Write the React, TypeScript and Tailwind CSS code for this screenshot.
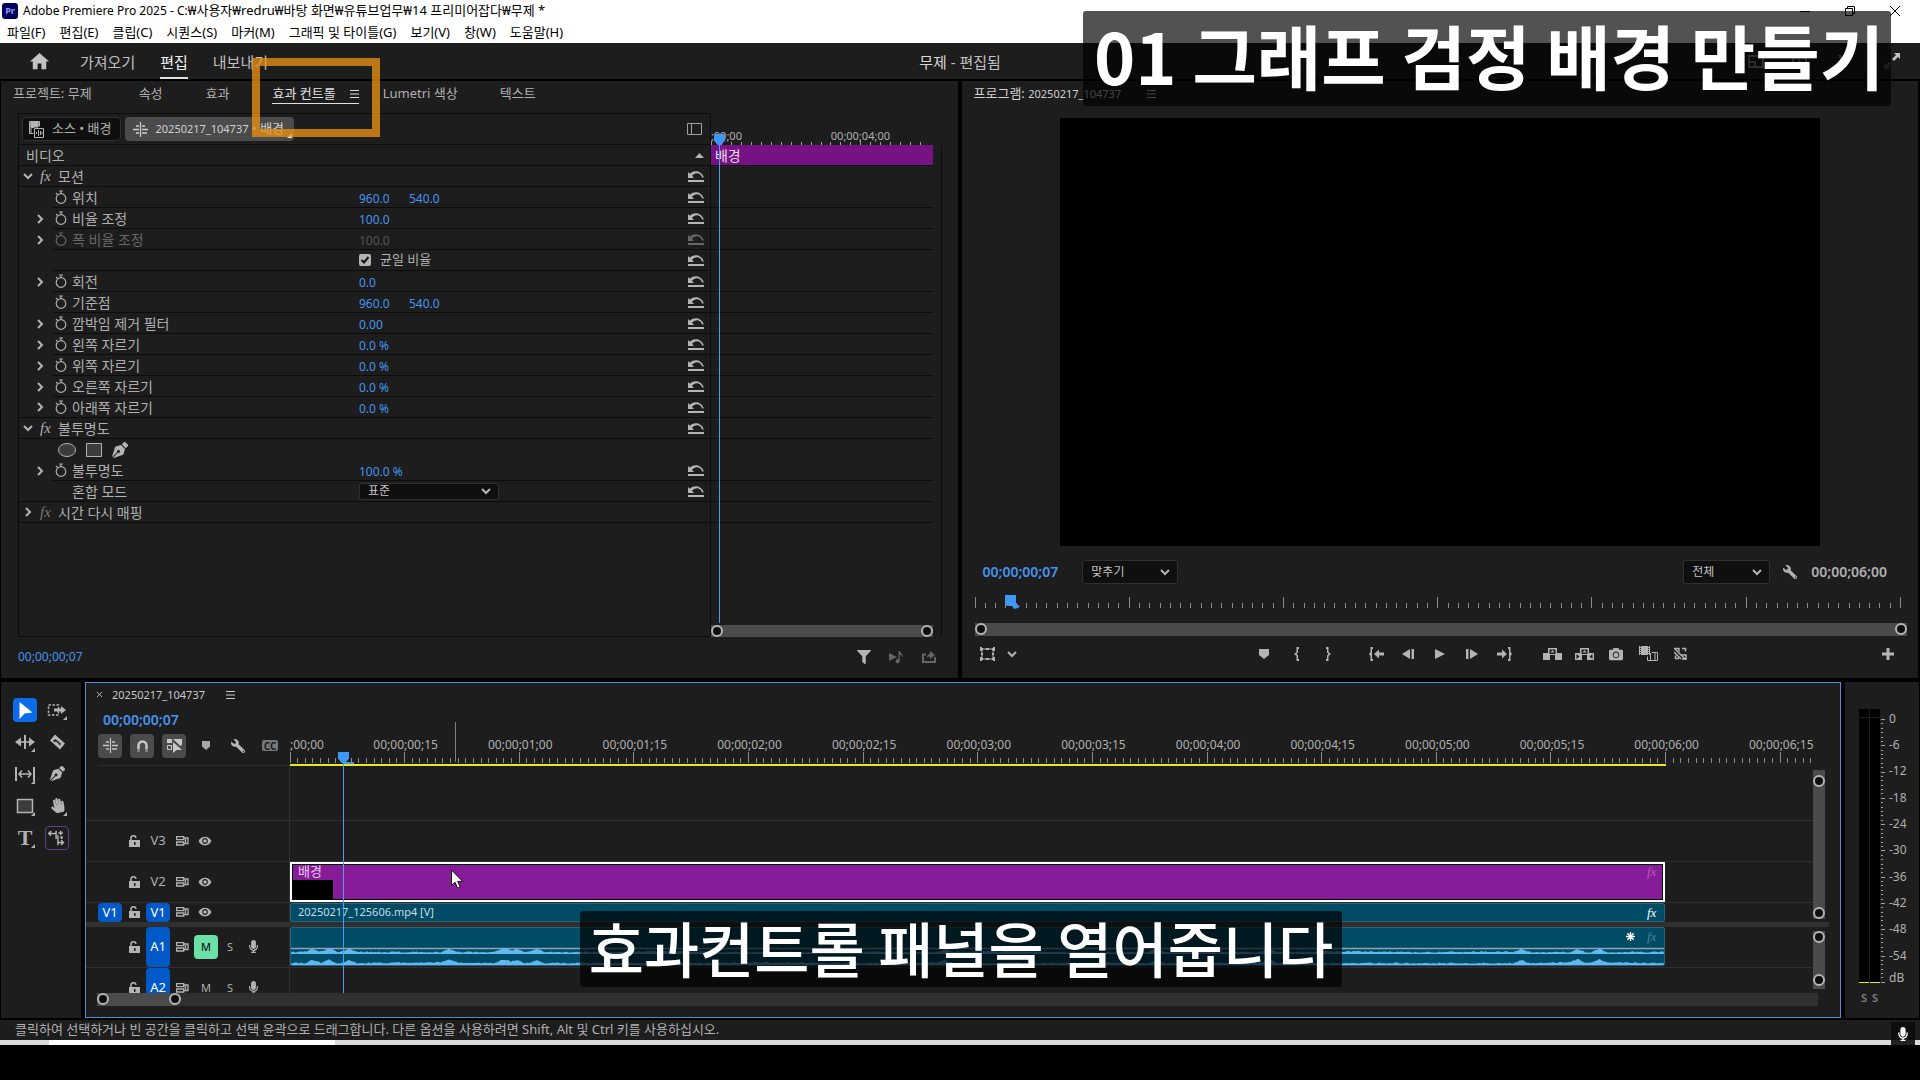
import type { ReactNode } from "react";
import { FaCamera, FaFilter, FaHandPaper, FaMicrophone, FaPenNib, FaWrench } from "react-icons/fa";
import { MdHome, MdRemoveRedEye } from "react-icons/md";

const MENUS = [
  "파일(F)",
  "편집(E)",
  "클립(C)",
  "시퀀스(S)",
  "마커(M)",
  "그래픽 및 타이틀(G)",
  "보기(V)",
  "창(W)",
  "도움말(H)",
];

type Param = {
  kind: "section" | "param" | "check" | "masks" | "blend";
  label: string;
  values?: string[];
  open?: boolean;
  chevron?: boolean;
  dim?: boolean;
  // line under the row: whole width, indented, or none
  line?: "full" | "indent" | "none";
  // whether the line carries on into the mini timeline
  lane?: boolean;
};

const PARAMS: Param[] = [
  { kind: "section", label: "모션", open: true, lane: false },
  { kind: "param", label: "위치", values: ["960.0", "540.0"] },
  { kind: "param", label: "비율 조정", values: ["100.0"], chevron: true },
  { kind: "param", label: "폭 비율 조정", values: ["100.0"], chevron: true, dim: true },
  { kind: "check", label: "균일 비율", lane: false },
  { kind: "param", label: "회전", values: ["0.0"], chevron: true },
  { kind: "param", label: "기준점", values: ["960.0", "540.0"] },
  { kind: "param", label: "깜박임 제거 필터", values: ["0.00"], chevron: true },
  { kind: "param", label: "왼쪽 자르기", values: ["0.0 %"], chevron: true },
  { kind: "param", label: "위쪽 자르기", values: ["0.0 %"], chevron: true },
  { kind: "param", label: "오른쪽 자르기", values: ["0.0 %"], chevron: true },
  { kind: "param", label: "아래쪽 자르기", values: ["0.0 %"], chevron: true, line: "full" },
  { kind: "section", label: "불투명도", open: true },
  { kind: "masks", label: "마스크", line: "none", lane: false },
  { kind: "param", label: "불투명도", values: ["100.0 %"], chevron: true },
  { kind: "blend", label: "혼합 모드", line: "full" },
  { kind: "section", label: "시간 다시 매핑", open: false, dim: true },
];

const LABELS = [
  "00;00;00;15",
  "00;00;01;00",
  "00;00;01;15",
  "00;00;02;00",
  "00;00;02;15",
  "00;00;03;00",
  "00;00;03;15",
  "00;00;04;00",
  "00;00;04;15",
  "00;00;05;00",
  "00;00;05;15",
  "00;00;06;00",
  "00;00;06;15",
];

// half-second spacing as a share of the visible sequence
const STEP = 7.522;
const PLAYHEAD = 3.51;

export default function App() {
  return (
    <div className="relative flex min-h-screen flex-col overflow-hidden bg-black font-[family-name:'Noto_Sans','Noto_Sans_CJK_KR',sans-serif] text-[13px] text-[#b0b0b0]">
      <TitleBar />
      <WorkspaceBar />
      <div className="mt-[2px] grid grid-cols-2 gap-1 pr-[2px] pl-px">
        <EffectControls />
        <ProgramMonitor />
      </div>
      <div className="mt-1 flex gap-1 pr-px pl-px">
        <Tools />
        <Timeline />
        <AudioMeter />
      </div>
      <footer className="mt-[2px] flex h-5 items-center bg-[#1d1d1d] pl-[15px] text-[13px]">
        클릭하여 선택하거나 빈 공간을 클릭하고 선택 윤곽으로 드래그합니다. 다른 옵션을 사용하려면 Shift, Alt 및 Ctrl 키를 사용하십시오.
      </footer>
      <div className="h-[5px] bg-[#d9d9d9] pl-[49px]">
        <div className="h-full w-[286px] bg-white" />
      </div>

      <div className="absolute top-[1022px] right-[5px] flex h-[23px] w-6 items-center justify-center bg-[#0c0c0c]/90">
        <FaMicrophone className="text-[14px] text-white" />
      </div>
      <div className="absolute top-[58px] left-[252px] h-[79px] w-32 border-8 border-[#ea9014]/78" />
      <h1 className="absolute top-[11px] right-[29px] flex h-[95px] w-[808px] items-center justify-center rounded-[3px] bg-black/68 pb-2 pl-1 font-[family-name:'Noto_Sans_CJK_KR',sans-serif] text-[70px] leading-none font-bold whitespace-nowrap text-white">
        01 그래프 검정 배경 만들기
      </h1>
      <p className="absolute top-[911px] left-[580px] flex h-[76px] w-[762px] items-center justify-center rounded-[3px] bg-black/68 pb-1 font-[family-name:'Noto_Sans_CJK_KR',sans-serif] text-[60px] leading-none font-medium whitespace-nowrap text-white">
        효과컨트롤 패널을 열어줍니다
      </p>
      <svg className="absolute top-[869px] left-[451px]" width="13" height="21" viewBox="0 0 13 21">
        <path d="M.5 1v15.500l3.500-3.300 2.600 6 2.600-1.200-2.500-5.600h5z" fill="#fff" stroke="#111" />
      </svg>
    </div>
  );
}

function TitleBar() {
  return (
    <header className="h-[43px] bg-white text-black">
      <div className="flex h-[22px] items-center pl-[2px]">
        <span className="flex h-4 w-4 items-center justify-center rounded-[3px] bg-[#00005b] text-[9px] font-bold text-[#9999ff]">Pr</span>
        <span className="ml-[5px] text-[12px]">
          Adobe Premiere Pro 2025 - C:<span className="text-[13px]">₩사용자₩redru₩바탕 화면₩유튜브업무₩14 프리미어잡다₩무제 *</span>
        </span>
        <div className="ml-auto flex gap-[35px] pr-[20px]">
          <button aria-label="최소화">
            <svg width="10" height="10" viewBox="0 0 10 10"><path d="M0 5.500h10" stroke="#000" /></svg>
          </button>
          <button aria-label="이전 크기로">
            <svg width="10" height="10" viewBox="0 0 10 10"><path d="M.5 2.500h7v7h-7zM2.500 2.500v-2h7v7h-2" fill="none" stroke="#000" /></svg>
          </button>
          <button aria-label="닫기">
            <svg width="10" height="10" viewBox="0 0 10 10"><path d="M0 0l10 10M10 0L0 10" stroke="#000" /></svg>
          </button>
        </div>
      </div>
      <nav className="flex h-[21px] items-center gap-[14px] pl-[7px] text-[13px]">
        {MENUS.map((m) => (
          <button key={m}>{m}</button>
        ))}
      </nav>
    </header>
  );
}

function WorkspaceBar() {
  return (
    <div className="grid h-9 grid-cols-[1fr_auto_1fr] items-stretch bg-[#1d1d1d] text-[15px] text-[#c0c0c0]">
      <div className="flex items-stretch pl-7">
        <button aria-label="홈" className="w-6">
          <MdHome className="text-[23px] text-[#c4c4c4]" />
        </button>
        <button className="ml-7 pt-[2px]">가져오기</button>
        <button className="ml-[25px] border-b-2 border-[#e0e0e0] pt-1 text-[#f0f0f0]">편집</button>
        <button className="ml-[25px] pt-[2px]">내보내기</button>
      </div>
      <div className="flex items-center pt-[2px]">
        <span className="text-[#d8d8d8]">무제</span>&nbsp;- 편집됨
      </div>
      <div className="flex items-center justify-end gap-[30px] pr-5">
        <svg width="106" height="16" viewBox="0 0 106 16" fill="none" stroke="#8a8a8a" strokeWidth="2">
          <path d="M1 3h14v11H1zM1 9h6v5M49 5h-4v9h13V5h-4M51.500 9V1M91 2l7 12M98 2l-7 12" />
        </svg>
        <button aria-label="전체 화면">
          <svg width="16" height="16" viewBox="0 0 16 16">
            <path d="M16 0v6l-2-2-4 4-2-2 4-4-2-2z" fill="#c4c4c4" />
            <path d="M0 16v-6l2 2 3-3 2 2-3 3 2 2z" fill="#5a5a5a" />
          </svg>
        </button>
      </div>
    </div>
  );
}

function Burger() {
  return (
    <svg width="9" height="8" viewBox="0 0 9 8">
      <path d="M0 .5h9M0 4h9M0 7.500h9" stroke="currentColor" />
    </svg>
  );
}

function Chevron({ open }: { open?: boolean }) {
  return (
    <svg width="10" height="10" viewBox="0 0 10 10" fill="none" stroke="#b4b4b4" strokeWidth="2">
      <path d={open ? "M1 3l4 4 4-4" : "M3 1l4 4-4 4"} />
    </svg>
  );
}

function Stopwatch() {
  return (
    <svg width="13" height="14" viewBox="0 0 13 14" fill="none" stroke="currentColor" strokeWidth="1.200">
      <circle cx="6" cy="8.500" r="4.800" />
      <path d="M4 1h4M6 1v2.500M1 3l1.500 1.500" />
    </svg>
  );
}

function ResetButton({ dim }: { dim?: boolean }) {
  return (
    <button aria-label="매개 변수 재설정" className={dim ? "text-[#666]" : "text-[#b4b4b4]"}>
      <svg width="16" height="11" viewBox="0 0 16 11" fill="currentColor">
        <path d="M0 9h16v2H0zM0 1l1.800 1.700C5-.7 13-1.200 15.800 6.500h-1.600C12.500 1.400 7 .8 4 4.700L6 7H0z" />
      </svg>
    </button>
  );
}

function Knob() {
  return <span className="block h-3 w-3 shrink-0 rounded-full border-2 border-[#b4b4b4] bg-[#0f0f0f]" />;
}

function PanelSelect({ label, value, className }: { label: string; value: string; className: string }) {
  return (
    <span className={`relative inline-flex items-center ${className}`}>
      <select aria-label={label} className="h-full w-full appearance-none rounded-[3px] border border-[#303030] bg-[#0f0f0f] pl-2 text-[12px] leading-none text-[#c4c4c4]">
        <option>{value}</option>
      </select>
      <span className="pointer-events-none absolute right-2">
        <Chevron open />
      </span>
    </span>
  );
}

function EffectControls() {
  return (
    <section className="flex flex-col bg-[#1d1d1d]">
      <div className="mb-[6px] flex h-[26px] items-center pl-3 text-[13px] whitespace-nowrap">
        <button>프로젝트: 무제</button>
        <button className="ml-[47px]">속성</button>
        <button className="ml-[43px]">효과</button>
        <button className="ml-[43px] flex h-5 items-center gap-[14px] border-b border-[#e0e0e0] text-[#e0e0e0]">
          효과 컨트롤 <Burger />
        </button>
        <button className="ml-6">Lumetri 색상</button>
        <button className="ml-[42px]">텍스트</button>
      </div>

      <div className="mr-4 ml-[17px] grid flex-1 grid-cols-[3fr_1fr] border-l border-[#0c0c0c]">
        <div className="flex flex-col border-t border-r border-b border-[#0c0c0c]">
          <div className="flex h-[31px] items-center border-b border-[#0c0c0c] pr-2 pl-[3px]">
            <button className="flex h-6 items-center gap-2 rounded-[4px] border border-[#303030] bg-[#0f0f0f] pr-2 pl-[6px] whitespace-nowrap">
              <svg width="15" height="17" viewBox="0 0 15 17" fill="none" stroke="#b4b4b4">
                <path d="M.5.500h10v5M.5.500v12h4M2 1v11M9 1v4M2 6.500h3" />
                <path d="M2 1h7v5H2z" fill="#b4b4b4" />
                <path d="M5.500 7.500h9v9h-9zM7.500 11v2M9.500 9v6M11.500 10v4M13 11v2" />
              </svg>
              소스 • 배경
            </button>
            <button className="relative ml-1 flex h-6 items-center gap-2 rounded-[4px] bg-[#4b4b4b] pr-[10px] pl-2 whitespace-nowrap text-[#d0d0d0]">
              <SequenceIcon />
              <span>
                <span className="text-[11px]">20250217_104737</span> • 배경
              </span>
              <svg className="absolute right-[2px] bottom-[3px]" width="5" height="5" viewBox="0 0 5 5">
                <path d="M5 0v5H0z" fill="#e8e8e8" />
              </svg>
            </button>
            <button aria-label="타임라인 보기 표시" className="ml-auto">
              <svg width="15" height="12" viewBox="0 0 15 12" fill="none" stroke="#a0a0a0">
                <path d="M.5.500h14v11H.5zM4.500.5v11" />
              </svg>
            </button>
          </div>
          <div className="flex h-[21px] items-center justify-between border-b border-[#0c0c0c] pr-[6px] pl-[7px] text-[14px]">
            비디오
            <svg width="9" height="5" viewBox="0 0 9 5">
              <path d="M4.500 0L9 5H0z" fill="#b4b4b4" />
            </svg>
          </div>
          {PARAMS.map((p, i) => (
            <ParamRow key={i} p={p} />
          ))}
        </div>
        <MiniTimeline />
      </div>

      <div className="flex h-[41px] items-center pr-[22px] pl-[17px]">
        <span className="text-[12px] text-[#4694ee]">00;00;00;07</span>
        <div className="ml-auto flex items-center gap-[18px]">
          <button aria-label="속성 필터">
            <FaFilter className="text-[14px] text-[#b4b4b4]" />
          </button>
          <button aria-label="오디오 재생">
            <svg width="15" height="12" viewBox="0 0 15 12" fill="#666">
              <path d="M0 2l8 4-8 4zM9.500 0h1.200c.2 2 3.500 2.500 3 6.500-.5-1.800-1.500-2.500-3-2.700V10a2 2 0 1 1-1.200-1.700z" />
            </svg>
          </button>
          <button aria-label="내보내기">
            <svg width="14" height="12" viewBox="0 0 14 12">
              <path d="M4 3.500H1v7.500h12V6" fill="none" stroke="#666" strokeWidth="2" />
              <path d="M5 7c0-3 1-4 3-4V0l5 4-5 4V5.500C6.500 5.500 6 6 5 7z" fill="#666" />
            </svg>
          </button>
        </div>
      </div>
    </section>
  );
}

function ParamRow({ p }: { p: Param }) {
  const tone = p.dim && p.kind === "param" ? "text-[#666]" : "";

  if (p.kind === "section") {
    return (
      <div className="flex h-[21px] items-center border-b border-[#0c0c0c] pr-[6px] pl-1 text-[14px]">
        <button aria-label={p.label} className="w-[17px]">
          <Chevron open={p.open} />
        </button>
        <span className={`w-[18px] font-[family-name:'Liberation_Serif',serif] text-[15px] italic ${p.dim ? "text-[#777]" : ""}`}>fx</span>
        <span>{p.label}</span>
        {p.open && (
          <span className="ml-auto flex">
            <ResetButton />
          </span>
        )}
      </div>
    );
  }

  if (p.kind === "masks") {
    return (
      <div className="flex h-[21px] items-center gap-[10px] pl-[39px]">
        <button aria-label="타원 마스크">
          <svg width="18" height="14" viewBox="0 0 18 14"><ellipse cx="9" cy="7" rx="8.500" ry="6.500" fill="#3c3c3c" stroke="#b4b4b4" /></svg>
        </button>
        <button aria-label="사각형 마스크">
          <svg width="16" height="14" viewBox="0 0 16 14"><path d="M.5.500h15v13H.5z" fill="#3c3c3c" stroke="#b4b4b4" /></svg>
        </button>
        <button aria-label="펜 마스크">
          <FaPenNib className="text-[16px] text-[#b4b4b4]" />
        </button>
      </div>
    );
  }

  return (
    <div className={`flex h-[21px] ${tone} ${p.line === "full" ? "border-b border-[#0c0c0c]" : ""}`}>
      <div className="flex w-[34px] items-center justify-end pr-2">
        {p.chevron && (
          <button aria-label={p.label}>
            <Chevron />
          </button>
        )}
      </div>
      <div className={`flex flex-1 items-center pr-[6px] ${p.line === "full" ? "" : "border-b border-[#0c0c0c]"}`}>
        <div className="flex w-[306px] items-center gap-1 pl-[2px] text-[14px]">
          {p.kind === "param" && (
            <button aria-label={`${p.label} 애니메이션 켜기`}>
              <Stopwatch />
            </button>
          )}
          {p.kind === "blend" && <span className="w-[13px]" />}
          {p.kind !== "check" && <span>{p.label}</span>}
        </div>
        {p.values?.map((v, i) => (
          <input key={i} aria-label={p.label} defaultValue={v} className={`w-[50px] pt-[3px] text-[12px] ${p.dim ? "text-[#555]" : "text-[#4694ee]"}`} />
        ))}
        {p.kind === "check" && (
          <label className="flex items-center gap-[9px] text-[13px]">
            <span className="relative flex h-3 w-3">
              <input type="checkbox" defaultChecked className="h-3 w-3 appearance-none rounded-[2px] bg-[#b4b4b4]" />
              <svg className="pointer-events-none absolute inset-0" width="12" height="12" viewBox="0 0 12 12" fill="none" stroke="#111" strokeWidth="2">
                <path d="M2.500 6l2.500 2.500L9.500 3" />
              </svg>
            </span>
            {p.label}
          </label>
        )}
        {p.kind === "blend" && <PanelSelect label={p.label} value="표준" className="h-[17px] w-[140px]" />}
        <span className="ml-auto flex">
          <ResetButton dim={p.dim} />
        </span>
      </div>
    </div>
  );
}

function MiniTimeline() {
  return (
    <div className="relative flex flex-col">
      <div className="relative h-8 overflow-hidden text-[11px]">
        <span className="absolute top-[17px] left-0 leading-none">;00;00</span>
        <span className="absolute top-[17px] left-[52%] leading-none">00;00;04;00</span>
        <svg className="absolute bottom-0 left-0 w-full" height="4">
          {Array.from({ length: 22 }, (_, i) => (
            <line key={i} x1={`${i * 4.300 + 0.400}%`} x2={`${i * 4.300 + 0.400}%`} y1={i % 15 ? 1 : 0} y2="4" stroke="#a0a0a0" shapeRendering="crispEdges" />
          ))}
        </svg>
      </div>
      <div className="flex flex-1 flex-col border-r border-[#0c0c0c] pr-2">
        <div className="flex h-5 items-center bg-[#761284] pl-1 text-[14px] text-[#f0d8f4]">배경</div>
        <div className="h-px bg-[#0c0c0c]" />
        {PARAMS.map((p, i) => (
          <div key={i} className={`h-[21px] ${p.lane === false ? "" : "border-b border-[#0c0c0c]"}`} />
        ))}
        <div className="mt-auto flex h-3 justify-between bg-[#4b4b4b]">
          <Knob />
          <Knob />
        </div>
      </div>
      <div className="absolute top-5 bottom-[14px] left-[3px] flex w-[11px] flex-col items-center">
        <PlayheadCap />
        <div className="w-px flex-1 bg-[#4b9cf5]" />
      </div>
    </div>
  );
}

function PlayheadCap() {
  return (
    <svg width="11" height="12" viewBox="0 0 12 12" preserveAspectRatio="none" className="shrink-0">
      <path d="M0 1h12v6.500L8 12H4L0 7.500z" fill="#4096f3" />
    </svg>
  );
}

function SequenceIcon() {
  return (
    <svg width="15" height="15" viewBox="0 0 15 15" fill="none" stroke="currentColor" strokeWidth="1.600">
      <path d="M7.500 0v15" strokeWidth="1.200" />
      <path d="M3 4h3M0 7.500h6M3 11h3M9 4h3M9 7.500h6M9 11h5" />
    </svg>
  );
}

function IconButton({ label, w = 16, h = 16, children }: { label: string; w?: number; h?: number; children: ReactNode }) {
  return (
    <button aria-label={label} className="flex h-8 w-8 items-center justify-center">
      <svg width={w} height={h} viewBox={`0 0 ${w} ${h}`} fill="#b4b4b4">
        {children}
      </svg>
    </button>
  );
}

function ProgramMonitor() {
  return (
    <section className="flex flex-col bg-[#1d1d1d]">
      <div className="flex h-[37px] items-start pt-[3px] pl-3 text-[#d0d0d0]">
        <span>
          프로그램: <span className="text-[11px]">20250217_104737</span>
        </span>
        <button aria-label="패널 메뉴" className="mt-[6px] ml-[26px]">
          <Burger />
        </button>
      </div>
      <div className="px-[98px]">
        <div className="aspect-video bg-black" />
      </div>
      <div className="mt-[14px] flex h-6 items-center pr-[31px] pl-[21px] text-[14px] font-semibold">
        <span className="text-[#4694ee]">00;00;00;07</span>
        <PanelSelect label="확대/축소" value="맞추기" className="ml-[24px] h-6 w-24 font-normal" />
        <PanelSelect label="재생 해상도" value="전체" className="ml-auto h-6 w-[87px] font-normal" />
        <button aria-label="설정" className="mr-[14px] ml-[13px]">
          <FaWrench className="-scale-x-100 text-[14px]" />
        </button>
        <span>00;00;06;00</span>
      </div>
      <div className="relative mt-[11px] mr-[18px] ml-[13px]">
        <svg className="block w-full overflow-visible" height="13">
          {Array.from({ length: 91 }, (_, i) => (
            <line key={i} x1={`${i / 0.900}%`} x2={`${i / 0.900}%`} y1={i % 15 ? 8 : 2} y2="13" stroke="#8c8c8c" shapeRendering="crispEdges" />
          ))}
        </svg>
        <svg className="absolute top-0 left-[3.300%]" width="16" height="14" viewBox="0 0 16 14">
          <path d="M0 0h11v9l4 2-2 2-4 1-2-3H2L0 9z" fill="#4096f3" />
        </svg>
      </div>
      <div className="mt-[15px] mr-[11px] ml-[13px] flex h-[13px] justify-between bg-[#4b4b4b]">
        <Knob />
        <Knob />
      </div>
      <div className="mb-[6px] flex h-9 items-center justify-between pr-[14px] pl-[13px]">
        <div className="flex w-[98px] items-center">
          <button aria-label="보기 옵션" className="ml-[5px]">
            <svg width="15" height="14" viewBox="0 0 15 14" fill="none" stroke="#b4b4b4">
              <path d="M2 2h11v10H2z" />
              <path d="M1 0v4M-1 2h4M14 0v4M12 2h4M1 10v4M-1 12h4M14 10v4M12 12h4M6 2h3M6 12h3M2 6v2M13 6v2" strokeWidth="2" />
            </svg>
          </button>
          <button aria-label="더 보기" className="ml-3">
            <Chevron open />
          </button>
        </div>
        <div className="flex gap-4">
          <div className="flex">
            <IconButton label="마커 추가" w={10} h={10}>
              <path d="M0 0h10v6l-5 4-5-4z" />
            </IconButton>
            <IconButton label="시작 표시" w={5} h={14}>
              <path d="M5 0v2H4v3.500L2.500 7 4 8.500V12h1v2H2.500V9L0 7l2.500-2V0z" />
            </IconButton>
            <IconButton label="종료 표시" w={5} h={14}>
              <path d="M0 0v2h1v3.500L2.500 7 1 8.500V12H0v2h2.500V9L5 7 2.500 5V0z" />
            </IconButton>
          </div>
          <div className="flex">
            <IconButton label="시작 지점으로 이동" w={15} h={14}>
              <path d="M4 0v2H3v10h1v2H1.500V9L0 7l1.500-2V0zM15 5.500v3h-5v3L5 7l5-4.500v3z" />
            </IconButton>
            <IconButton label="이전 프레임" w={12} h={10}>
              <path d="M8 0v10L0 5zM9.500 0H12v10H9.500z" />
            </IconButton>
            <IconButton label="재생" w={10} h={10}>
              <path d="M0 0l10 5-10 5z" />
            </IconButton>
            <IconButton label="다음 프레임" w={12} h={10}>
              <path d="M4 0v10l8-5zM0 0h2.500v10H0z" />
            </IconButton>
            <IconButton label="종료 지점으로 이동" w={15} h={14}>
              <path d="M11 0v2h1v10h-1v2h2.500V9L15 7l-1.500-2V0zM0 5.500v3h5v3L10 7 5 2.500v3z" />
            </IconButton>
          </div>
          <div className="flex">
            <IconButton label="제거" w={19} h={12}>
              <path d="M0 5h5V0h9v5h5v7h-7V7H7v5H0zM6.500 1.500V6h6V1.500z" fillRule="evenodd" />
              <path d="M9.500 2l2 2.500h-4z" />
            </IconButton>
            <IconButton label="추출" w={19} h={12}>
              <path d="M0 5h5V0h9v5h5v7h-7V7H7v5H0zM6.500 1.500V6h6V1.500zM1.500 6v5l3-2.500zM17.500 6v5l-3-2.500z" fillRule="evenodd" />
              <path d="M9.500 2l2 2.500h-4z" />
            </IconButton>
            <button aria-label="프레임 내보내기" className="flex h-8 w-8 items-center justify-center">
              <FaCamera className="text-[14px] text-[#b4b4b4]" />
            </button>
            <IconButton label="비교 보기" w={19} h={15}>
              <path d="M0 0h11v9H0z" />
              <path d="M1.500 0v9M9.500 0v9" stroke="#1d1d1d" strokeDasharray="1 1" />
              <path d="M8.500 10.500v4h10v-8h-6M11.500 7v7M16 7v7" fill="none" stroke="#b4b4b4" />
            </IconButton>
            <IconButton label="프록시 전환" w={13} h={13}>
              <path d="M1 1.500h4v3M7.500 8h4.500v4H8" fill="none" stroke="#b4b4b4" strokeWidth="1.500" />
              <path d="M0 1l12 12M0 5l7 7M8 1.500h3.500v3M1.500 8.500v3H5" fill="none" stroke="#b4b4b4" strokeWidth="1.500" />
            </IconButton>
          </div>
        </div>
        <div className="w-8">
          <IconButton label="단추 편집기" w={12} h={12}>
            <path d="M4.500 0h3v4.500H12v3H7.500V12h-3V7.500H0v-3h4.500z" />
          </IconButton>
        </div>
      </div>
    </section>
  );
}

function Corner() {
  return <path d="M22 18v4h-4z" fill="#b4b4b4" stroke="none" />;
}

function Tool({ label, className = "", children }: { label: string; className?: string; children: ReactNode }) {
  return (
    <button aria-label={label} className={`flex h-6 w-6 items-center justify-center rounded-[4px] ${className}`}>
      <svg width="24" height="24" viewBox="0 0 24 24" fill="none" stroke="#b4b4b4" strokeWidth="1.500">
        {children}
      </svg>
    </button>
  );
}

function Tools() {
  return (
    <aside className="w-20 bg-[#1d1d1d] pt-4 pl-3">
      <div className="grid w-14 grid-cols-2 gap-2">
        <Tool label="선택 도구" className="bg-[#0a6ce8]">
          <path d="M6.500 4v17l5-5.500 8-1z" fill="#fff" stroke="none" />
        </Tool>
        <Tool label="앞으로 트랙 선택 도구">
          <path d="M3.500 7h10v10h-10z" strokeDasharray="2.500 1.500" />
          <path d="M9 12h8" strokeWidth="3" />
          <path d="M16 8l5 4-5 4z" fill="#b4b4b4" stroke="none" />
          <Corner />
        </Tool>
        <Tool label="잔물결 편집 도구">
          <path d="M12 5v14" strokeWidth="2" />
          <path d="M6 12h12" />
          <path d="M2 12l6-4.500v9zM22 12l-6-4.500v9z" fill="#b4b4b4" stroke="none" />
          <Corner />
        </Tool>
        <Tool label="자르기 도구">
          <path d="M10 4.500l10 9-5 6-10-9z" fill="#b4b4b4" stroke="none" />
          <path d="M10 9.500l5 4.500M8.500 10.500l2 1M14.500 15l.500-2" stroke="#1d1d1d" />
        </Tool>
        <Tool label="밀어넣기 도구">
          <path d="M3 5v14M21 5v14" strokeWidth="2" />
          <path d="M6 12h12M9 8.500L6 12l3 3.500M15 8.500l3 3.500-3 3.500" />
          <Corner />
        </Tool>
        <button aria-label="펜 도구" className="flex h-6 w-6 items-center justify-center">
          <FaPenNib className="text-[15px] text-[#b4b4b4]" />
        </button>
        <Tool label="사각형 도구">
          <path d="M4.500 5.500h15v13h-15z" fill="#3c3c3c" />
          <Corner />
        </Tool>
        <span className="relative">
          <button aria-label="손 도구" className="flex h-6 w-6 items-center justify-center">
            <FaHandPaper className="-rotate-12 text-[15px] text-[#b4b4b4]" />
          </button>
          <svg className="pointer-events-none absolute top-0 left-0" width="24" height="24"><Corner /></svg>
        </span>
        <span className="relative">
          <button aria-label="문자 도구" className="flex h-6 w-6 items-center justify-center font-[family-name:'Liberation_Serif',serif] text-[22px] leading-none font-bold">
            T
          </button>
          <svg className="pointer-events-none absolute top-0 left-0" width="24" height="24"><Corner /></svg>
        </span>
        <Tool label="생성형 확장 도구" className="border border-[#5c3f8f]">
          <path d="M3 7h8M5.500 4.500L3 7l2.500 2.500M11 4v9M13 9v11M13 17h6M16.500 14.500L19 17l-2.500 2.500M16 4v5M13.500 6.500h5M17 10v3M15.500 11.500h3" strokeWidth="1.600" />
        </Tool>
      </div>
    </aside>
  );
}

function Timeline() {
  return (
    <section className="flex min-w-0 flex-1 flex-col border border-[#4d8fdb] bg-[#1d1d1d]">
      <div className="flex h-6 items-center pl-[11px] text-[11px] text-[#c8c8c8]">
        <button aria-label="시퀀스 닫기">
          <svg width="5" height="5" viewBox="0 0 5 5"><path d="M0 0l5 5M5 0L0 5" stroke="#b4b4b4" /></svg>
        </button>
        <span className="ml-[10px]">20250217_104737</span>
        <button aria-label="패널 메뉴" className="ml-[21px]">
          <Burger />
        </button>
      </div>

      <div className="relative flex flex-col">
        <div className="flex h-[59px]">
          <div className="flex w-[204px] flex-col pl-3">
            <span className="flex h-[27px] items-center pb-[2px] pl-[5px] text-[14px] font-semibold text-[#4694ee]">00;00;00;07</span>
            <div className="flex gap-2 text-[#c8c8c8]">
              <button aria-label="시퀀스를 중첩으로 삽입" className="flex h-6 w-6 items-center justify-center rounded-[4px] bg-[#4b4b4b]">
                <SequenceIcon />
              </button>
              <button aria-label="스냅" className="flex h-6 w-6 items-center justify-center rounded-[4px] bg-[#4b4b4b]">
                <svg width="11" height="12" viewBox="0 0 11 12" fill="none" stroke="currentColor" strokeWidth="2.500">
                  <path d="M1.500 9V5.500a4 4 0 0 1 8 0V9" />
                  <path d="M1.500 9v3M9.500 9v3" stroke="#888" />
                </svg>
              </button>
              <button aria-label="연결된 선택" className="flex h-6 w-6 items-center justify-center rounded-[4px] bg-[#4b4b4b]">
                <svg width="15" height="15" viewBox="0 0 15 15" fill="currentColor">
                  <path d="M0 1h5v4H0zM6.500 1H15v5.500l-1.500 1.500L6.500 1.500zM6 4l9 8H9.500L6 15z" />
                  <path d="M4.500 7.500h-4v4h4z" fill="none" stroke="currentColor" />
                </svg>
              </button>
              <button aria-label="마커 추가" className="flex h-6 w-6 items-center justify-center">
                <svg width="8" height="9" viewBox="0 0 8 9"><path d="M0 0h8v5.500L4 9 0 5.500z" fill="#a8a8a8" /></svg>
              </button>
              <button aria-label="타임라인 표시 설정" className="flex h-6 w-6 items-center justify-center">
                <FaWrench className="-scale-x-100 text-[14px] text-[#b4b4b4]" />
              </button>
              <button aria-label="캡션 트랙 옵션" className="flex h-6 w-6 items-center justify-center">
                <span className="flex h-[11px] w-4 items-center justify-center rounded-[2px] bg-[#777] text-[10px] leading-none font-bold text-[#1d1d1d]">CC</span>
              </button>
            </div>
            <div className="mt-[7px] h-px bg-[#303030]" />
          </div>
          <Ruler />
        </div>

        <div className="flex">
          <div className="min-w-0 flex-1">
            <Track height="h-[55px]" />
            <Track height="h-[41px]" header={<VideoHeader name="V3" />} />
            <Track height="h-[41px]" header={<VideoHeader name="V2" />}>
              <div className="relative h-10 w-[90.300%] border-2 border-white bg-[#861c98] p-px outline outline-black -outline-offset-3">
                <span className="block h-[15px] pl-[5px] text-[13px] leading-[12px] text-[#ecc8f0]">배경</span>
                <div className="h-[20px] w-10 bg-black" />
                <span className="absolute top-[1px] right-[7px] font-[family-name:'Liberation_Serif',serif] text-[13px] leading-none text-[#b65cc4] italic">fx</span>
              </div>
            </Track>
            <Track height="h-[19px]" last header={<VideoHeader name="V1" patched />}>
              <div className="flex h-[19px] w-[90.300%] items-center justify-between rounded-[2px] border border-[#2c6478] bg-[#004b65] pr-2 pl-[7px] text-[11px] text-[#c8dde4]">
                20250217_125606.mp4 [V]
                <span className="font-[family-name:'Liberation_Serif',serif] text-[13px] leading-none text-white italic">fx</span>
              </div>
            </Track>
          </div>
          <div className="mt-1 mr-[15px] mb-[3px] flex w-3 flex-col justify-between bg-[#4b4b4b] pt-[5px]">
            <Knob />
            <Knob />
          </div>
        </div>
        <div className="mr-[11px] h-[5px] bg-[#303030]" />
        <div className="flex h-[66px] overflow-hidden">
          <div className="min-w-0 flex-1">
            <Track height="h-[41px]" header={<AudioHeader name="A1" muted />}>
              <AudioClip />
            </Track>
            <Track height="h-[41px]" header={<AudioHeader name="A2" />} />
          </div>
          <div className="mt-1 mr-[15px] mb-1 flex w-3 flex-col justify-between bg-[#4b4b4b] pb-[3px]">
            <Knob />
            <Knob />
          </div>
        </div>

        <div className="pointer-events-none absolute top-0 right-[27px] bottom-0 left-[204px]">
          <div className="absolute top-[44px] bottom-0 -ml-[5px] flex w-[11px] flex-col items-center" style={{ left: `${PLAYHEAD}%` }}>
            <PlayheadCap />
            <div className="w-px flex-1 bg-[#4b9cf5]" />
            <div className="absolute top-[11px] left-[6px] h-[2px] w-[10px] bg-[#4096f3]" />
          </div>
          <div className="absolute top-[15px] left-[10.850%] h-10 w-px bg-[#808080]" />
        </div>
      </div>

      <div className="mr-[22px] mb-[11px] ml-[11px] h-[13px] bg-[#303030]">
        <div className="flex h-full w-[84px] justify-between rounded-r-full bg-[#4b4b4b]">
          <Knob />
          <Knob />
        </div>
      </div>
    </section>
  );
}

function Ruler() {
  return (
    <div className="relative mr-[26px] flex-1 overflow-hidden text-[12px]">
      <span className="absolute top-[29px] left-0 leading-[18px]">;00;00</span>
      {LABELS.map((t, i) => (
        <span key={t} className="absolute top-[29px] -translate-x-1/2 pl-[2px] leading-[18px]" style={{ left: `${(i + 1) * STEP}%` }}>
          {t}
        </span>
      ))}
      <svg className="absolute bottom-[3px] left-0 w-full" height="11">
        {Array.from({ length: 200 }, (_, i) => (
          <line key={i} x1={`${(i * STEP) / 15}%`} x2={`${(i * STEP) / 15}%`} y1={i % 15 ? 6 : 0} y2="11" stroke="#8c8c8c" shapeRendering="crispEdges" />
        ))}
      </svg>
      <div className="absolute bottom-0 left-0 h-[2px] w-[90.300%] bg-[#ece81a]" />
    </div>
  );
}

function Track({ height, last, header, children }: { height: string; last?: boolean; header?: ReactNode; children?: ReactNode }) {
  return (
    <div className={`flex ${height} ${last ? "" : "border-b border-[#303030]"}`}>
      <div className="flex w-[204px] shrink-0 items-center border-r border-[#303030] pl-3">{header}</div>
      <div className="min-w-0 flex-1">{children}</div>
    </div>
  );
}

function LockButton() {
  return (
    <button aria-label="트랙 잠금 전환" className="flex w-6 justify-center">
      <svg width="11" height="12" viewBox="0 0 11 12">
        <path d="M2 6V3.500a2.500 2.500 0 0 1 5-.5" fill="none" stroke="#b4b4b4" strokeWidth="1.500" />
        <path d="M0 5h11v7H0zM5 7v3h1.500V7z" fill="#b4b4b4" fillRule="evenodd" />
      </svg>
    </button>
  );
}

function SyncButton() {
  return (
    <button aria-label="동기화 잠금 전환" className="flex w-6 justify-center">
      <svg width="13" height="10" viewBox="0 0 13 10" fill="none" stroke="#b4b4b4" strokeWidth="1.300">
        <path d="M.7.700h7v3h-7zM.7 6h7v3h-7zM8 2h4v5.500H8M9.500 3v3.500" />
      </svg>
    </button>
  );
}

function VideoHeader({ name, patched }: { name: string; patched?: boolean }) {
  return (
    <>
      <button aria-label="소스 패치" className={`h-[19px] w-6 rounded-[4px] text-[13px] leading-none text-white ${patched ? "bg-[#0059c7]" : ""}`}>
        {patched ? "V1" : ""}
      </button>
      <LockButton />
      <button className={`h-[19px] w-6 rounded-[4px] text-[13px] leading-none ${patched ? "bg-[#0059c7] text-white" : ""}`}>{name}</button>
      <SyncButton />
      <button aria-label="트랙 출력 전환" className="flex w-[22px] justify-center">
        <MdRemoveRedEye className="text-[14px] text-[#b4b4b4]" />
      </button>
    </>
  );
}

function AudioHeader({ name, muted }: { name: string; muted?: boolean }) {
  return (
    <>
      <span className="ml-6 flex">
        <LockButton />
      </span>
      <button className="h-10 w-6 rounded-[4px] bg-[#0059c7] text-[13px] text-white">{name}</button>
      <SyncButton />
      <button className={`h-6 w-6 rounded-[4px] text-[11px] ${muted ? "bg-[#6be0a7] text-black" : ""}`}>M</button>
      <button className="h-6 w-6 text-[11px]">S</button>
      <button aria-label="음성 더빙 녹음" className="flex w-[22px] justify-center">
        <FaMicrophone className="text-[13px] text-[#b4b4b4]" />
      </button>
    </>
  );
}

const SPIKES = [22, 38, 58, 158, 211, 216, 226, 246, 655, 867, 980, 1232, 1288, 1310];

// outline of a quiet recording, a few pixels above its base line
function wave(base: number, seed: number) {
  let d = `M0 ${base}`;
  for (let x = 0; x <= 1375; x += 2) {
    const noise = (Math.abs(Math.sin(x * 12.990 + seed) * 437.500) % 1) ** 2;
    const swell = Math.max(0, Math.sin(x / 37 + seed) * Math.sin(x / 91)) * 0.800;
    const spike = SPIKES.reduce((m, s) => Math.max(m, 4 - Math.abs(x - s) / 2), 0);
    d += `L${x} ${(base - 1.500 - noise * 1.200 - swell - spike * 0.800).toFixed(1)}`;
  }
  return `${d}L1375 ${base}z`;
}

function AudioClip() {
  return (
    <div className="relative h-[39px] w-[90.300%] overflow-hidden rounded-[2px] border border-[#2c6478] bg-[#004b65]">
      <svg className="absolute inset-0 h-full w-full" viewBox="0 0 1375 37" preserveAspectRatio="none">
        <path d="M0 20.500h1375" stroke="#8fa5ad" strokeWidth="1.500" />
        <path d={wave(26, 1)} fill="#5fb8f2" />
        <path d={wave(37, 4)} fill="#5fb8f2" />
      </svg>
      <div className="absolute top-[2px] right-2 flex items-center gap-3">
        <svg width="9" height="9" viewBox="0 0 10 10" stroke="#fff" strokeWidth="1.500">
          <path d="M5 0v10M0 5h10M1.500 1.500l7 7M8.500 1.500l-7 7" />
        </svg>
        <span className="font-[family-name:'Liberation_Serif',serif] text-[13px] leading-none text-[#4a8397] italic">fx</span>
      </div>
    </div>
  );
}

const DB = ["0", "-6", "-12", "-18", "-24", "-30", "-36", "-42", "-48", "-54"];

function AudioMeter() {
  return (
    <aside className="w-[74px] bg-[#1d1d1d] pt-[27px] pl-[14px]">
      <div className="flex">
        <div>
          <div className="flex gap-px">
            <div className="h-2 w-[10px] bg-black" />
            <div className="h-2 w-[10px] bg-black" />
          </div>
          <div className="mt-px flex gap-px">
            <div className="h-[265px] w-[10px] border-b border-[#e8e832] bg-black" />
            <div className="h-[265px] w-[10px] border-b border-[#e8e832] bg-black" />
          </div>
        </div>
        <svg className="ml-px" width="4" height="274">
          {Array.from({ length: 61 }, (_, i) => (
            <line key={i} x1="0" x2={i % 6 ? 2 : 4} y1={10.500 + i * 4.380} y2={10.500 + i * 4.380} stroke="#a0a0a0" shapeRendering="crispEdges" />
          ))}
        </svg>
        <div className="ml-1 text-[12px] leading-none">
          <div className="mt-1 flex h-[249px] flex-col justify-between">
            {DB.map((v) => (
              <span key={v}>{v}</span>
            ))}
          </div>
          <div className="mt-[10px]">dB</div>
        </div>
      </div>
      <div className="mt-2 flex gap-[5px] pl-[2px] text-[11px] leading-none font-semibold text-[#808080]">
        <button>S</button>
        <button>S</button>
      </div>
    </aside>
  );
}
